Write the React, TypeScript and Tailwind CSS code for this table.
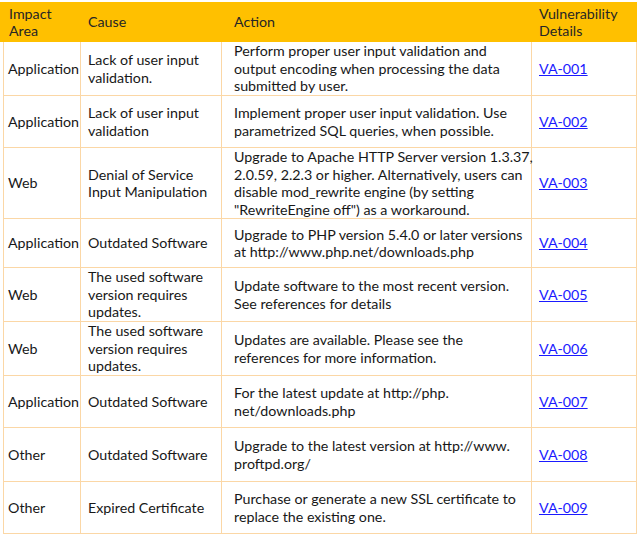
import React from "react";

type Row = {
  area: string;
  cause: string[];
  action: string[];
  id: string;
  h: string;
};

const rows: Row[] = [
  {
    area: "Application",
    cause: ["Lack of user input", "validation."],
    action: [
      "Perform proper user input validation and",
      "output encoding when processing the data",
      "submitted by user.",
    ],
    id: "VA-001",
    h: "h-[54px]",
  },
  {
    area: "Application",
    cause: ["Lack of user input", "validation"],
    action: ["Implement proper user input validation. Use", "parametrized SQL queries, when possible."],
    id: "VA-002",
    h: "h-[52px]",
  },
  {
    area: "Web",
    cause: ["Denial of Service", "Input Manipulation"],
    action: [
      "Upgrade to Apache HTTP Server version 1.3.37,",
      "2.0.59, 2.2.3 or higher. Alternatively, users can",
      "disable mod_rewrite engine (by setting",
      "\"RewriteEngine off\") as a workaround.",
    ],
    id: "VA-003",
    h: "h-[71px]",
  },
  {
    area: "Application",
    cause: ["Outdated Software"],
    action: ["Upgrade to PHP version 5.4.0 or later versions", "at http://www.php.net/downloads.php"],
    id: "VA-004",
    h: "h-[49px]",
  },
  {
    area: "Web",
    cause: ["The used software", "version requires", "updates."],
    action: ["Update software to the most recent version.", "See references for details"],
    id: "VA-005",
    h: "h-[54px]",
  },
  {
    area: "Web",
    cause: ["The used software", "version requires", "updates."],
    action: ["Updates are available. Please see the", "references for more information."],
    id: "VA-006",
    h: "h-[54px]",
  },
  {
    area: "Application",
    cause: ["Outdated Software"],
    action: ["For the latest update at http://php.", "net/downloads.php"],
    id: "VA-007",
    h: "h-[52px]",
  },
  {
    area: "Other",
    cause: ["Outdated Software"],
    action: ["Upgrade to the latest version at http://www.", "proftpd.org/"],
    id: "VA-008",
    h: "h-[54px]",
  },
  {
    area: "Other",
    cause: ["Expired Certificate"],
    action: ["Purchase or generate a new SSL certificate to", "replace the existing one."],
    id: "VA-009",
    h: "h-[52px]",
  },
];

function Lines({ items }: { items: string[] }) {
  return (
    <div>
      {items.map((t, i) => (
        <div key={i} className="whitespace-nowrap">
          {t}
        </div>
      ))}
    </div>
  );
}

const cell = "flex items-center border-r border-b border-[#fbd7a6]";

export default function App() {
  return (
    <div className="min-h-[537px] bg-white pt-[2px] font-['Lato',sans-serif] text-[14.25px] leading-[17.5px] text-[#181818]">
      <div className="grid h-[40px] w-[637px] grid-cols-[81px_141px_310px_105px] bg-[#ffc000] text-[#262626]">
        <div className="flex items-center pl-[9px]">
          <Lines items={["Impact", "Area"]} />
        </div>
        <div className="flex items-center pl-[7px]">Cause</div>
        <div className="flex items-center pl-[12px]">Action</div>
        <div className="flex items-center pl-[7px]">
          <Lines items={["Vulnerability", "Details"]} />
        </div>
      </div>
      <div className="ml-[3px] w-[634px] border-l border-[#fbd7a6]">
        {rows.map((r) => (
          <div key={r.id} className={`grid grid-cols-[77px_141px_310px_105px] ${r.h}`}>
            <div className={`${cell} pl-[4px]`}>{r.area}</div>
            <div className={`${cell} pl-[7px]`}>
              <Lines items={r.cause} />
            </div>
            <div className={`${cell} pl-[12px]`}>
              <Lines items={r.action} />
            </div>
            <div className={`${cell} pl-[7px]`}>
              <a href="#" className="text-[#1a1aff] underline">
                {r.id}
              </a>
            </div>
          </div>
        ))}
      </div>
    </div>
  );
}
